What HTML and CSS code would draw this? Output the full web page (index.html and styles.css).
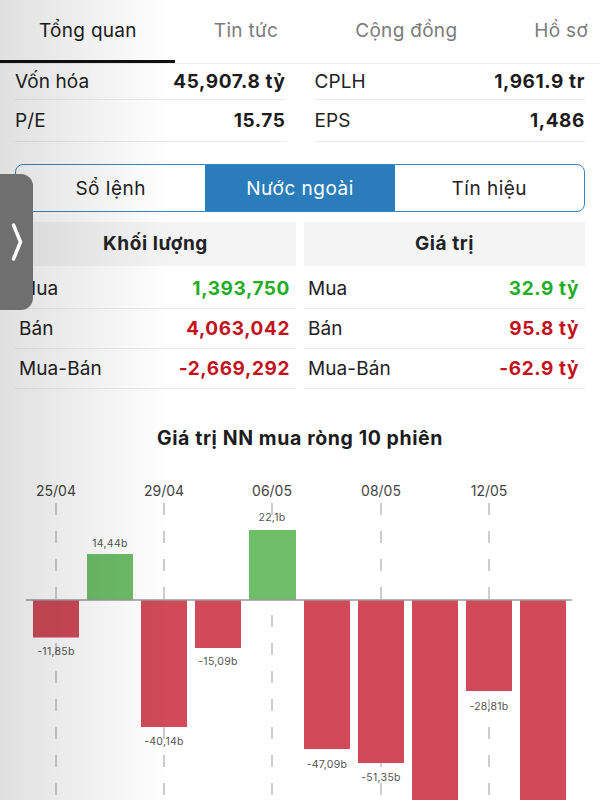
FILE: index.html
```html
<!DOCTYPE html>
<html lang="vi">
<head>
    <meta charset="UTF-8">
    <meta name="viewport" content="width=device-width, initial-scale=1.0">
    <title>Tổng quan</title>
    <link rel="stylesheet" href="styles.css">
</head>
<body>
    <div class="tabs">
        <div class="tab active">Tổng quan</div>
        <div class="tab">Tin tức</div>
        <div class="tab">Cộng đồng</div>
        <div class="tab">Hồ sơ</div>
    </div>

    <div class="page">
        <div class="stats">
            <div class="stat first"><span>Vốn hóa</span><b>45,907.8 tỷ</b></div>
            <div class="stat first"><span>CPLH</span><b>1,961.9 tr</b></div>
            <div class="stat"><span>P/E</span><b>15.75</b></div>
            <div class="stat"><span>EPS</span><b>1,486</b></div>
        </div>

        <div class="segments">
            <div class="segment">Sổ lệnh</div>
            <div class="segment selected">Nước ngoài</div>
            <div class="segment">Tín hiệu</div>
        </div>

        <div class="foreign">
            <div class="col">
                <div class="col-head">Khối lượng</div>
                <div class="row"><span>Mua</span><b class="up">1,393,750</b></div>
                <div class="row"><span>Bán</span><b class="down">4,063,042</b></div>
                <div class="row"><span>Mua-Bán</span><b class="down">-2,669,292</b></div>
            </div>
            <div class="col">
                <div class="col-head">Giá trị</div>
                <div class="row"><span>Mua</span><b class="up">32.9 tỷ</b></div>
                <div class="row"><span>Bán</span><b class="down">95.8 tỷ</b></div>
                <div class="row"><span>Mua-Bán</span><b class="down">-62.9 tỷ</b></div>
            </div>
        </div>

        <h3 class="chart-title">Giá trị NN mua ròng 10 phiên</h3>
    </div>

    <svg class="chart" width="600" height="330" viewBox="0 0 600 330">
        <g class="dates">
            <text x="56" y="20">25/04</text>
            <text x="164" y="20">29/04</text>
            <text x="272" y="20">06/05</text>
            <text x="381" y="20">08/05</text>
            <text x="489" y="20">12/05</text>
        </g>
        <g class="grid">
            <line x1="56" y1="33" x2="56" y2="330"/>
            <line x1="164" y1="33" x2="164" y2="330"/>
            <line x1="272" y1="33" x2="272" y2="330"/>
            <line x1="381" y1="33" x2="381" y2="330"/>
            <line x1="489" y1="33" x2="489" y2="330"/>
        </g>
        <g class="bars">
            <rect class="neg" x="33" y="130" width="46" height="37.5"/>
            <rect class="pos" x="87" y="84" width="46" height="46"/>
            <rect class="neg" x="141" y="130" width="46" height="127"/>
            <rect class="neg" x="195" y="130" width="46" height="48"/>
            <rect class="pos" x="249" y="60" width="47" height="70"/>
            <rect class="neg" x="304" y="130" width="46" height="149"/>
            <rect class="neg" x="358" y="130" width="46" height="163"/>
            <rect class="neg" x="412" y="130" width="46" height="200"/>
            <rect class="neg" x="466" y="130" width="46" height="91"/>
            <rect class="neg" x="520" y="130" width="46" height="200"/>
        </g>
        <line class="axis" x1="26" y1="130" x2="572" y2="130"/>
        <g class="values">
            <text x="56" y="181">-11,85b</text>
            <text x="110" y="73">14,44b</text>
            <text x="164" y="271">-40,14b</text>
            <text x="218" y="191">-15,09b</text>
            <text x="272" y="47">22,1b</text>
            <text x="327" y="294">-47,09b</text>
            <text x="381" y="307">-51,35b</text>
            <text x="489" y="236">-28,81b</text>
        </g>
    </svg>

    <div class="handle">
        <svg width="12" height="40" viewBox="0 0 12 40">
            <path d="M2.5 3 L9.5 20 L2.5 37" fill="none" stroke="#fff" stroke-width="3.5" stroke-linecap="round" stroke-linejoin="round"/>
        </svg>
    </div>
</body>
</html>
```

FILE: styles.css
```css
body {
    margin: 0;
    width: 600px;
    height: 800px;
    overflow: hidden;
    background-color: #fff;
    font-family: Inter, "Noto Sans", sans-serif;
    color: #222;
}

/* shade from the panel sliding in on the left */
body::after {
    content: "";
    position: fixed;
    left: 0;
    top: 0;
    bottom: 0;
    width: 170px;
    background: linear-gradient(to right, rgba(0, 0, 0, 0.12), rgba(0, 0, 0, 0));
    pointer-events: none;
}

.tabs {
    display: flex;
    height: 63px;
    border-bottom: 1px solid #ececec;
    white-space: nowrap;
    overflow: hidden;
}

.tab {
    flex: none;
    padding: 0 38px 0 39px;
    font-size: 19px;
    letter-spacing: 0.3px;
    line-height: 61px;
    color: #7b7b7b;
    border-bottom: 3px solid transparent;
}

.tab.active {
    color: #1c1c1c;
    border-bottom-color: #111;
}

.page {
    padding: 0 15px;
}

.stats {
    display: grid;
    grid-template-columns: 1fr 1fr;
    column-gap: 29px;
}

.stat {
    display: flex;
    justify-content: space-between;
    align-items: center;
    height: 41px;
    border-bottom: 1px solid #ebebeb;
    font-size: 19px;
    letter-spacing: 0.1px;
}

.stat.first {
    height: 35px;
}

.stat b, .row b {
    font-weight: 700;
    letter-spacing: 0.6px;
    color: #1c1c1c;
}

.segments {
    display: flex;
    margin-top: 22px;
    height: 46px;
    border: 1.5px solid #3a86c4;
    border-radius: 8px;
    overflow: hidden;
}

.segment {
    flex: 1;
    display: flex;
    justify-content: center;
    align-items: center;
    font-size: 19px;
    letter-spacing: 0.5px;
    color: #222;
}

.segment.selected {
    background-color: #2a7cba;
    color: #fff;
}

.foreign {
    display: grid;
    grid-template-columns: 1fr 1fr;
    gap: 8px;
    margin-top: 10px;
}

.col-head {
    height: 44px;
    line-height: 44px;
    text-align: center;
    font-size: 19px;
    font-weight: 700;
    letter-spacing: 0.6px;
    background-color: #f4f4f4;
    margin-bottom: 3px;
}

.row {
    display: flex;
    justify-content: space-between;
    align-items: center;
    height: 39px;
    padding: 0 6px 0 4px;
    border-bottom: 1px solid #ebebeb;
    font-size: 19px;
    letter-spacing: 0.1px;
}

.row b.up {
    color: #21ad26;
}

.row b.down {
    color: #c3121e;
}

.chart-title {
    margin: 36px 0 0;
    height: 45px;
    line-height: 26px;
    text-align: center;
    font-size: 19.5px;
    font-weight: 700;
    letter-spacing: 0.6px;
    color: #1c1c1c;
}

.chart {
    display: block;
}

.chart text {
    text-anchor: middle;
    dominant-baseline: central;
}

.dates text {
    font-size: 14px;
    fill: #444;
}

.grid line {
    stroke: #bdbdbd;
    stroke-width: 1.5;
    stroke-dasharray: 12 16;
}

.bars .pos {
    fill: #6dbd69;
}

.bars .neg {
    fill: #d04a59;
}

.axis {
    stroke: #9a9a9a;
    stroke-width: 1.5;
}

.values text {
    font-size: 10.5px;
    fill: #555;
    letter-spacing: 0.3px;
}

.handle {
    position: fixed;
    left: 0;
    top: 174px;
    width: 33px;
    height: 136px;
    background-color: #6f6f6f;
    border-radius: 0 12px 12px 0;
    display: flex;
    justify-content: center;
    align-items: center;
    z-index: 2;
}
```
